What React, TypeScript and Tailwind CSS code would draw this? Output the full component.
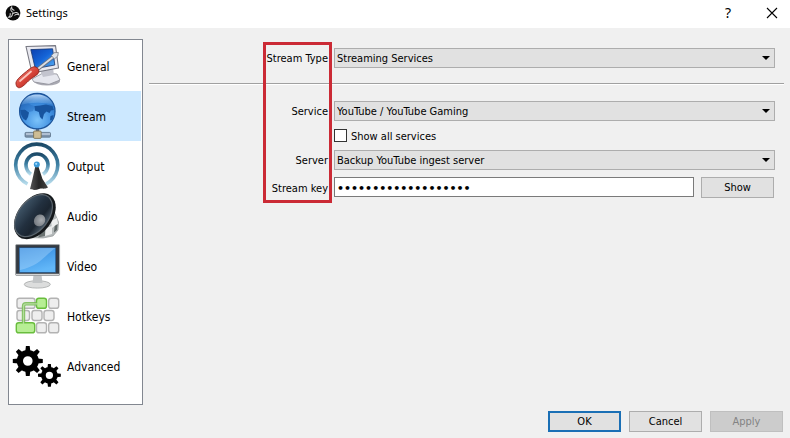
import { useState } from "react";
import type { ReactNode } from "react";

function ObsLogo() {
  return (
    <svg viewBox="0 0 16 16" className="size-4" aria-hidden="true">
      <circle cx="8" cy="8" r="7.4" fill="#0b0b0b" />
      {[10, 130, 250].map((angle) => (
        <path
          key={angle}
          d="M8 7.4C5.6 6.8 4.2 4.6 5.6 2.4C5.9 4.2 6.8 5 8.6 5.2"
          fill="none"
          stroke="#cfcfcf"
          strokeWidth="1"
          strokeLinecap="round"
          transform={`rotate(${angle} 8 8)`}
        />
      ))}
    </svg>
  );
}

function Icon({ children }: { children: ReactNode }) {
  return (
    <svg viewBox="0 0 50 50" className="size-[50px] shrink-0" aria-hidden="true">
      {children}
    </svg>
  );
}

function GeneralIcon() {
  return (
    <Icon>
      <defs>
        <linearGradient id="crt" x1="0" y1="0" x2="1" y2="1">
          <stop offset="0" stopColor="#0b3fae" />
          <stop offset="0.5" stopColor="#1565d8" />
          <stop offset="1" stopColor="#5db4f5" />
        </linearGradient>
        <linearGradient id="handle" x1="0" y1="0" x2="1" y2="1">
          <stop offset="0" stopColor="#f49a8c" />
          <stop offset="0.5" stopColor="#d8453a" />
          <stop offset="1" stopColor="#9b1a14" />
        </linearGradient>
      </defs>
      <ellipse cx="35" cy="40" rx="13" ry="4.5" fill="#a9a9b2" />
      <path d="M20 38L31 32L45 33L48 39L37 43.4L22 41Z" fill="#e6e7ee" stroke="#8c8d96" strokeWidth="0.8" />
      <path d="M28 29L41 27L42 34L31 36Z" fill="#c3c4ce" />
      <path d="M14 5.5L43.5 4.6L46.5 27L20 32Z" fill="#e9e9f0" stroke="#777882" strokeWidth="1.1" strokeLinejoin="round" />
      <path d="M18.8 8.6L40.6 7.8L42.8 24L23.3 27.6Z" fill="url(#crt)" stroke="#17356f" strokeWidth="0.8" />
      <path d="M23 30.4L42 15.4" stroke="#6d717a" strokeWidth="3.4" />
      <path d="M23 30.2L42 15.2" stroke="#d9dde5" strokeWidth="1.8" />
      <path d="M39.4 14.6L42 11.8L46.3 11.4L45.8 15L42.4 18Z" fill="#dfe3ea" stroke="#777b84" strokeWidth="0.8" />
      <path d="M4 43C3.2 40 8 35.6 13 31.6C17.5 28 20.6 25 23.6 26C26.8 27 27.6 30.6 26.2 32.4C24.2 35 20 36.4 16.4 40C12.4 44 9 47.5 6.2 46.6C4.8 46 4.2 44.5 4 43Z" fill="url(#handle)" stroke="#8a1a14" strokeWidth="0.8" />
      <path d="M8 40L19 30.5" stroke="#fbc4bb" strokeWidth="1.8" strokeLinecap="round" />
    </Icon>
  );
}

function StreamIcon() {
  return (
    <Icon>
      <defs>
        <radialGradient id="globe" cx="0.5" cy="0.75" r="0.75">
          <stop offset="0" stopColor="#7cc3fa" />
          <stop offset="0.55" stopColor="#3f8fe0" />
          <stop offset="1" stopColor="#1f62b4" />
        </radialGradient>
        <linearGradient id="shine" x1="0" y1="0" x2="0" y2="1">
          <stop offset="0" stopColor="#cfe7ff" stopOpacity="0.85" />
          <stop offset="1" stopColor="#8cc4f5" stopOpacity="0.15" />
        </linearGradient>
      </defs>
      <rect x="13" y="41.4" width="25.5" height="4.8" rx="1" fill="#7d93ab" stroke="#556a80" strokeWidth="0.7" />
      <path d="M14 43H38" stroke="#c6d5e4" strokeWidth="1.4" />
      <rect x="23.8" y="37" width="3.4" height="4" fill="#5f7187" />
      <rect x="21.6" y="40" width="7.6" height="7.4" rx="1" fill="#cdbd95" stroke="#74694c" strokeWidth="0.8" />
      <circle cx="25.3" cy="20.2" r="17.7" fill="url(#globe)" stroke="#1d559b" strokeWidth="1.3" />
      <path d="M9 14C11 10 14 7 18 5.6L22 7L20 10L16 12L19 14L23 15L21 20L17 21L13 18L9 19Z" fill="#1f5fb0" opacity="0.35" />
      <path d="M8.3 19L13 18.5L17 21.5L16 26L14 29.5L11.5 28C9.5 25.5 8.4 22.5 8.3 19Z" fill="#17549f" />
      <path d="M22.5 15L28 14.5L34 13.5L40.5 15L41.8 19L39 19.5L37.5 22L34.5 20.5L32 23L30.5 28.5L28 26L26.8 21L22.8 19.5Z" fill="#17549f" />
      <path d="M38.5 25L41.5 24L40.5 28.5L38 29.5Z" fill="#17549f" />
      <path d="M9 14C13 5 20 3.6 25.3 3.6C31 3.6 38 6 41.4 14C33 10.8 18 11 9 14Z" fill="url(#shine)" />
    </Icon>
  );
}

function OutputIcon() {
  return (
    <Icon>
      <defs>
        <linearGradient id="wave" x1="0" y1="0" x2="0" y2="1">
          <stop offset="0" stopColor="#1c4a68" />
          <stop offset="0.5" stopColor="#3d7fa3" />
          <stop offset="1" stopColor="#b7dcec" />
        </linearGradient>
        <linearGradient id="tower" x1="0" y1="0" x2="1" y2="0">
          <stop offset="0" stopColor="#565656" />
          <stop offset="0.5" stopColor="#252525" />
          <stop offset="1" stopColor="#444" />
        </linearGradient>
      </defs>
      <path d="M15.5 43A21 21 0 1 1 34 43" fill="none" stroke="url(#wave)" strokeWidth="3.6" />
      <path d="M19 33.2A11 11 0 1 1 31 33.2" fill="none" stroke="url(#wave)" strokeWidth="3.6" />
      <path d="M23.4 25H26.2L30.5 38L36 46.5C33 48.5 30 47 27 48C24 49.4 20 49 18 48L20.5 38Z" fill="url(#tower)" />
      <circle cx="24.8" cy="23.6" r="3" fill="#3b9ad8" />
      <circle cx="24.2" cy="22.8" r="1.1" fill="#a6dcff" />
    </Icon>
  );
}

function AudioIcon() {
  return (
    <Icon>
      <defs>
        <linearGradient id="cone" x1="0" y1="0" x2="0" y2="1">
          <stop offset="0" stopColor="#3d5264" />
          <stop offset="0.45" stopColor="#22303f" />
          <stop offset="0.75" stopColor="#1b2530" />
          <stop offset="1" stopColor="#465563" />
        </linearGradient>
        <radialGradient id="cap" cx="0.6" cy="0.6" r="0.7">
          <stop offset="0" stopColor="#a9adb1" />
          <stop offset="1" stopColor="#6d737a" />
        </radialGradient>
      </defs>
      <path d="M41 18L46.5 31L46 39L41 45L31 47L16 46.6Z" fill="#b4b9ba" stroke="#8a8f8f" strokeWidth="0.6" />
      <path d="M39 30L45 27L46 33L40 37Z" fill="#eceeee" />
      <path d="M34 37L40 35L40 43L33 45Z" fill="#e9ebeb" />
      <path d="M28 43L33 38L33 45L26 46.6Z" fill="#6a7271" />
      <path d="M42.6 35L45.6 33L45 39L42 41.6Z" fill="#5d6665" />
      <g transform="rotate(-52 22 24.5)">
        <ellipse cx="22" cy="25.6" rx="26" ry="17" fill="#15191c" />
        <ellipse cx="21.6" cy="24.2" rx="24.6" ry="15.6" fill="#5b656d" />
        <ellipse cx="21.6" cy="24.2" rx="23.4" ry="14.4" fill="url(#cone)" />
      </g>
      <ellipse cx="27.6" cy="29.4" rx="6.2" ry="5.4" fill="url(#cap)" transform="rotate(-52 27.6 29.4)" />
    </Icon>
  );
}

function VideoIcon() {
  return (
    <Icon>
      <defs>
        <linearGradient id="lcd" x1="0" y1="0" x2="0.4" y2="1">
          <stop offset="0" stopColor="#2f86dc" />
          <stop offset="1" stopColor="#62b7f8" />
        </linearGradient>
      </defs>
      <ellipse cx="25.3" cy="43.4" rx="13" ry="3.7" fill="#dcdddd" stroke="#a6a8a8" strokeWidth="0.8" />
      <path d="M21.5 34H29.5L30.5 42H20.5Z" fill="#c2c5c7" />
      <rect x="3.6" y="3.6" width="44" height="30.8" rx="1" fill="#343a42" stroke="#a8abad" strokeWidth="0.9" />
      <rect x="7.3" y="6.8" width="36.4" height="24.6" fill="url(#lcd)" stroke="#1b4d83" strokeWidth="0.5" />
      <path d="M7.6 7H43.4C34 13 28 25 8 29Z" fill="#bce0ff" opacity="0.36" />
      <path d="M4 33.3H47" stroke="#d3d5d6" strokeWidth="1.2" />
    </Icon>
  );
}

function Key({ x, y, w, active }: { x: number; y: number; w: number; active?: boolean }) {
  return (
    <rect
      x={x}
      y={y}
      width={w}
      height={10}
      rx={2.4}
      fill={active ? "#b7ee94" : "#eeeeee"}
      stroke={active ? "#69bd3d" : "#b3b3b3"}
      strokeWidth={1.4}
    />
  );
}

function HotkeysIcon() {
  return (
    <Icon>
      <Key x={5} y={7.3} w={18} />
      <Key x={36.7} y={7.3} w={10} />
      <Key x={5} y={19.5} w={12.5} />
      <Key x={20} y={19.5} w={10} />
      <Key x={32} y={19.5} w={10} />
      <Key x={24.5} y={31.8} w={10} />
      <Key x={36.7} y={31.8} w={10} />
      <Key x={24.5} y={7.3} w={10} active />
      <Key x={4.3} y={31.8} w={18.4} active />
      <path d="M11.5 32V15.4Q11.5 12.8 14 12.8H25" fill="none" stroke="#72b84e" strokeWidth="3.4" opacity="0.85" />
      <path d="M11.5 33V15.4Q11.5 12.8 14 12.8H26" fill="none" stroke="#b4dc9d" strokeWidth="1.2" />
    </Icon>
  );
}

function Gear({ cx, cy, scale }: { cx: number; cy: number; scale: number }) {
  return (
    <g transform={`translate(${cx} ${cy}) scale(${scale})`}>
      {[0, 45, 90, 135, 180, 225, 270, 315].map((angle) => (
        <path key={angle} d="M-2.6 -9L-1.9 -15H1.9L2.6 -9Z" fill="#000" transform={`rotate(${angle})`} />
      ))}
      <circle r="7.9" fill="none" stroke="#000" strokeWidth="6.2" />
    </g>
  );
}

function AdvancedIcon() {
  return (
    <Icon>
      <Gear cx={15.8} cy={20} scale={1} />
      <Gear cx={37.4} cy={34.3} scale={0.76} />
    </Icon>
  );
}

const pages = [
  { name: "General", icon: <GeneralIcon /> },
  { name: "Stream", icon: <StreamIcon /> },
  { name: "Output", icon: <OutputIcon /> },
  { name: "Audio", icon: <AudioIcon /> },
  { name: "Video", icon: <VideoIcon /> },
  { name: "Hotkeys", icon: <HotkeysIcon /> },
  { name: "Advanced", icon: <AdvancedIcon /> },
];

function ComboBox({ id, value }: { id: string; value: string }) {
  return (
    <div className="relative">
      <select
        id={id}
        defaultValue={value}
        className="block h-5 w-full appearance-none border border-[#adadad] bg-[#e1e1e1] pl-[2px] pr-6 pt-[2px] text-black outline-none"
      >
        <option>{value}</option>
      </select>
      <svg viewBox="0 0 8 4" className="pointer-events-none absolute right-[5px] top-2 h-1 w-2" aria-hidden="true">
        <path d="M0 0H8L4 4Z" fill="#000" />
      </svg>
    </div>
  );
}

const label = "pr-[6px] pt-[2px] text-right";
const row = "grid grid-cols-[185px_1fr] items-center";
const button = "h-[21px] w-[73px] pt-px";

export default function App() {
  const [page, setPage] = useState("Stream");

  return (
    <div className="flex min-h-screen flex-col bg-[#f0f0f0] font-['DejaVu_Sans_Condensed','Noto_Sans',sans-serif] text-[11px] leading-4 text-black">
      <header className="flex h-7 items-center bg-white pb-[2px] pl-[5px] pr-[10px]">
        <ObsLogo />
        <h1 className="ml-[5px] flex-1 font-['Noto_Sans',sans-serif]">Settings</h1>
        <button type="button" aria-label="Help" className="mr-7 w-4 font-['Noto_Sans',sans-serif] text-sm">
          ?
        </button>
        <button type="button" aria-label="Close" className="size-4">
          <svg viewBox="0 0 16 16" className="size-4" aria-hidden="true">
            <path d="M3 3L13 13M13 3L3 13" stroke="#000" strokeWidth="1.1" />
          </svg>
        </button>
      </header>

      <main className="flex flex-1 items-start pl-2 pr-[6px] pt-[11px]">
        <nav className="w-[135px] shrink-0 border border-[#828790] bg-white px-px pb-[13px] pt-px text-xs">
          {pages.map(({ name, icon }) => (
            <button
              key={name}
              type="button"
              aria-current={page === name ? "page" : undefined}
              onClick={() => setPage(name)}
              className="flex h-[50px] w-full items-center gap-[5px] pl-[2px] text-left aria-[current=page]:bg-[#cce8ff]"
            >
              {icon}
              <span className="pt-[2px]">{name}</span>
            </button>
          ))}
        </nav>

        <form className="relative ml-[6px] flex-1 pt-[9px]">
          <div className={`${row} pr-[9px]`}>
            <label htmlFor="type" className={label}>Stream Type</label>
            <ComboBox id="type" value="Streaming Services" />
          </div>

          <hr className="mb-4 mt-[15px] h-[2px] border-b border-t border-b-white border-t-[#a0a0a0]" />

          <div className={`${row} pr-[9px]`}>
            <label htmlFor="service" className={label}>Service</label>
            <ComboBox id="service" value="YouTube / YouTube Gaming" />
          </div>
          <div className="flex h-[29px] items-center pl-[185px]">
            <input
              id="all"
              type="checkbox"
              className="size-[13px] appearance-none border border-[#333] bg-white checked:bg-[#0078d7]"
            />
            <label htmlFor="all" className="pl-1 pt-[2px]">Show all services</label>
          </div>
          <div className={`${row} pr-[9px]`}>
            <label htmlFor="server" className={label}>Server</label>
            <ComboBox id="server" value="Backup YouTube ingest server" />
          </div>
          <div className={`${row} mt-[7px] pr-[10px]`}>
            <label htmlFor="key" className={label}>Stream key</label>
            <div className="flex gap-[7px]">
              <input
                id="key"
                type="password"
                defaultValue="abcd-efgh-ijkl-mnop"
                className="h-5 min-w-0 flex-1 border border-[#7a7a7a] bg-white px-[2px] pt-[2px] font-['DejaVu_Sans',sans-serif] text-[11px] font-bold outline-none"
              />
              <button type="button" className={`${button} border border-[#adadad] bg-[#e1e1e1]`}>Show</button>
            </div>
          </div>

          <div className="pointer-events-none absolute left-[114px] top-[3px] h-[161px] w-[69px] border-[3px] border-[#cb2a35]" />
        </form>
      </main>

      <footer className="flex justify-end gap-2 pb-[6px] pr-[7px]">
        <button type="button" className={`${button} border-2 border-[#1a6fb5] bg-[#e1e1e1]`}>OK</button>
        <button type="button" className={`${button} border border-[#adadad] bg-[#e1e1e1]`}>Cancel</button>
        <button type="button" disabled className={`${button} border border-[#bfbfbf] bg-[#cccccc] text-[#838383]`}>Apply</button>
      </footer>
    </div>
  );
}
